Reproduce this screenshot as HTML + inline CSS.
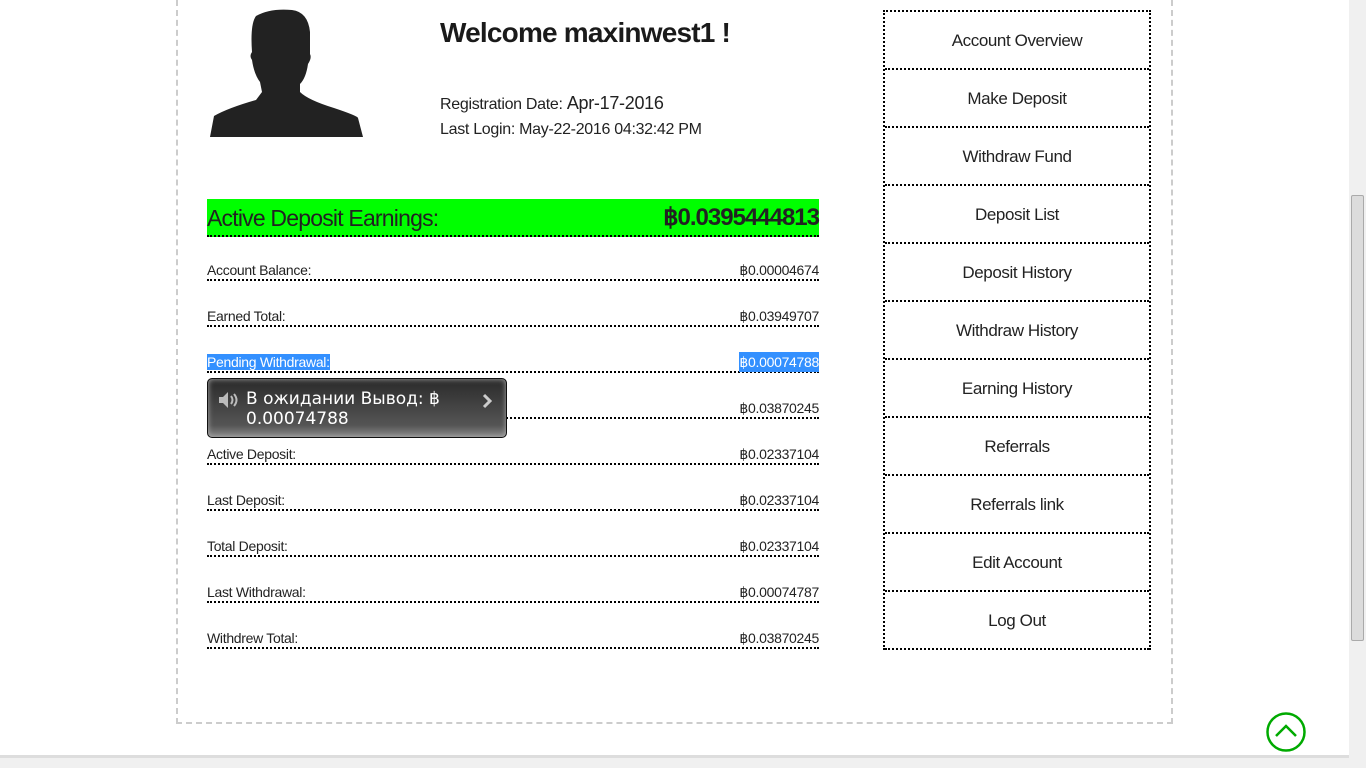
<!DOCTYPE html>
<html><head><meta charset="utf-8"><style>
*{margin:0;padding:0;box-sizing:border-box}
body{width:1366px;height:768px;overflow:hidden;background:#fff;font-family:"Liberation Sans",sans-serif;color:#222;position:relative}
.box{position:absolute;left:176px;top:-10px;width:997px;height:734px;border:2px dashed #ccc}
.abs{position:absolute}
h1{position:absolute;left:440px;top:17px;font-size:28px;font-weight:bold;color:#1a1a1a;letter-spacing:-0.8px}
.info{position:absolute;left:440px;font-size:16px;letter-spacing:-0.3px}
.green{position:absolute;left:207px;top:199px;width:612px;height:38px;background:#00ff00;border-bottom:2px dotted #000;font-size:23px;line-height:38px;letter-spacing:-0.8px}
.row{position:absolute;left:207px;width:612px;height:21px;border-bottom:2px dotted #000;font-size:14px;line-height:20px;letter-spacing:-0.3px}
.r{position:absolute;right:0;top:0}
.menu{position:absolute;left:883px;top:10px;width:268px;border:2px dotted #000;border-bottom:none}
.menu div{height:58px;border-bottom:2px dotted #000;text-align:center;line-height:58px;font-size:17px;color:#222;letter-spacing:-0.4px}
.sel{background:#3390ff;color:#fff}
.tip{position:absolute;left:207px;top:378px;width:300px;height:60px;border:1px solid #111;border-radius:5px;background:linear-gradient(#2a2a2a,#555 80%,#888);box-shadow:inset 0 0 6px #aaa;color:#fff;font-family:"DejaVu Sans",sans-serif;font-size:17px;line-height:20px;padding:10px 0 0 38px}
</style></head><body>
<div class="box"></div>
<svg class="abs" style="left:208px;top:8px" width="156" height="130" viewBox="0 0 156 130"><path fill="#222" d="M48 8 Q62 0 84 2 Q100 4 102 24 L102 46 Q104 50 100 56 Q98 70 92 76 L92 84 Q100 92 126 100 Q150 108 150 110 L155 129 L2 129 L6 108 Q20 100 48 92 L54 84 L52 74 Q46 66 44 52 Q41 48 44 44 Q42 16 48 8Z"/></svg>
<h1>Welcome maxinwest1 !</h1>
<div class="info" style="top:93px">Registration Date: <span style="font-size:18px">Apr-17-2016</span></div>
<div class="info" style="top:121px">Last Login: May-22-2016 04:32:42 PM</div>
<div class="green">Active Deposit Earnings:<span class="r" style="font-size:24px;font-weight:bold;letter-spacing:-1px">฿0.0395444813</span></div>
<div class="row" style="top:260px">Account Balance:<span class="r">฿0.00004674</span></div>
<div class="row" style="top:306px">Earned Total:<span class="r">฿0.03949707</span></div>
<div class="row" style="top:352px"><span class="sel">Pending Withdrawal:</span><span class="r sel">฿0.00074788</span></div>
<div class="row" style="top:398px">Withdrew Total:<span class="r">฿0.03870245</span></div>
<div class="row" style="top:444px">Active Deposit:<span class="r">฿0.02337104</span></div>
<div class="row" style="top:490px">Last Deposit:<span class="r">฿0.02337104</span></div>
<div class="row" style="top:536px">Total Deposit:<span class="r">฿0.02337104</span></div>
<div class="row" style="top:582px">Last Withdrawal:<span class="r">฿0.00074787</span></div>
<div class="row" style="top:628px">Withdrew Total:<span class="r">฿0.03870245</span></div>
<div class="tip">В ожидании Вывод: ฿<br>0.00074788
<svg class="abs" style="left:10px;top:12px" width="22" height="18" viewBox="0 0 22 18"><path fill="#bbb" d="M1 6h4l5-5v16l-5-5H1z"/><path d="M13 5q3 4 0 8M16 3q5 6 0 12" stroke="#bbb" stroke-width="2" fill="none"/></svg>
<svg class="abs" style="left:274px;top:14px" width="12" height="16" viewBox="0 0 12 16"><path d="M2 2l6 6-6 6" stroke="#ccc" stroke-width="3" fill="none"/></svg>
</div>
<div class="menu"><div>Account Overview</div><div>Make Deposit</div><div>Withdraw Fund</div><div>Deposit List</div><div>Deposit History</div><div>Withdraw History</div><div>Earning History</div><div>Referrals</div><div>Referrals link</div><div>Edit Account</div><div>Log Out</div></div>
<svg class="abs" style="left:1265px;top:711px" width="42" height="42" viewBox="0 0 42 42"><circle cx="21" cy="21" r="18.5" stroke="#0a0" stroke-width="2.5" fill="none"/><path d="M11 25l10-10 10 10" stroke="#0a0" stroke-width="2.5" fill="none"/></svg>
<div class="abs" style="left:0;top:755px;width:1349px;height:13px;background:#f0f0f0;border-top:3px solid #ddd"></div>
<div class="abs" style="left:1349px;top:0;width:17px;height:768px;background:#f0f0f0"></div>
<div class="abs" style="left:1351px;top:195px;width:13px;height:446px;background:#dcdcdc;border:1px solid #aaa;border-radius:2px"></div>
</body></html>
